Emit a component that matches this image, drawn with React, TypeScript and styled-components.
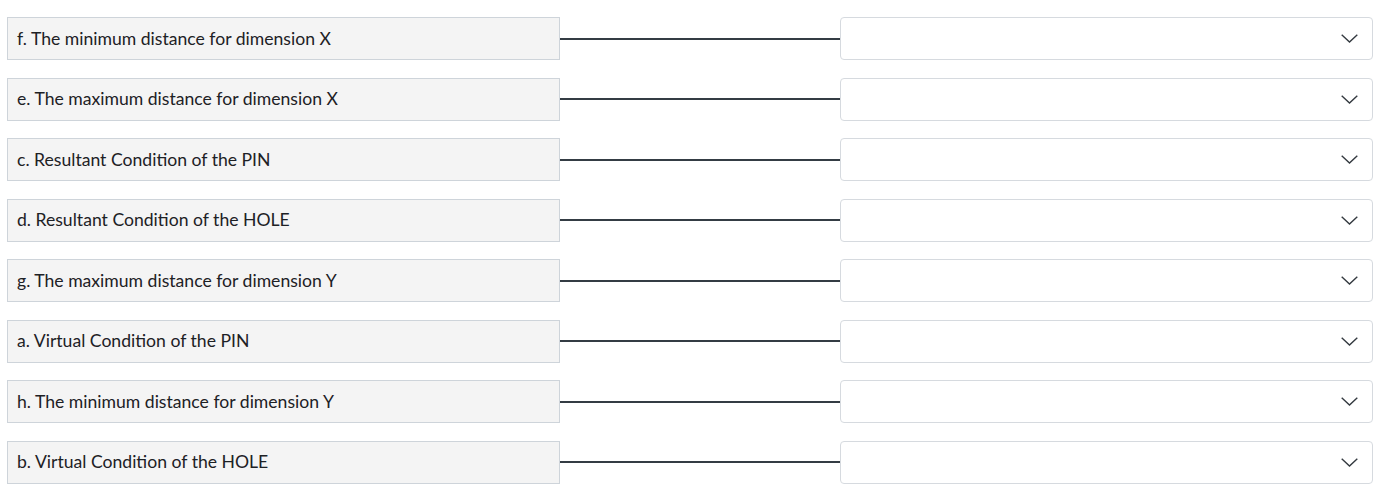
import styled, { createGlobalStyle } from "styled-components";

const GlobalStyle = createGlobalStyle`
    body {
        margin: 0;
        background: #fff;
        font-family: Lato, "Liberation Sans", sans-serif;
        color: #1d2125;
    }
`;

const List = styled.div`
    display: flex;
    flex-direction: column;
    gap: 17.5px;
    padding: 17px 4px 0 7px;
`;

const Row = styled.div`
    display: flex;
    align-items: center;
    height: 43px;
`;

const Prompt = styled.div`
    box-sizing: border-box;
    width: 553px;
    height: 100%;
    display: flex;
    align-items: center;
    padding: 0 9px 1px;
    background: #f4f4f4;
    border: 1px solid #ced4da;
    font-size: 17.6px;
    white-space: nowrap;
`;

const Connector = styled.div`
    width: 280px;
    height: 2px;
    background: #343c44;
`;

const Select = styled.div`
    box-sizing: border-box;
    flex: 1;
    height: 100%;
    display: flex;
    align-items: center;
    justify-content: flex-end;
    padding-right: 14px;
    border: 1px solid #d6dadf;
    border-radius: 4px;
    background: #fff;
`;

const Chevron = () => (
    <svg width="17" height="9" viewBox="0 0 17 9">
        <path d="M0.7 0.7 L8.5 8 L16.3 0.7" fill="none" stroke="#343a40" strokeWidth="1.4" />
    </svg>
);

const items = [
    "f. The minimum distance for dimension X",
    "e. The maximum distance for dimension X",
    "c. Resultant Condition of the PIN",
    "d. Resultant Condition of the HOLE",
    "g. The maximum distance for dimension Y",
    "a. Virtual Condition of the PIN",
    "h. The minimum distance for dimension Y",
    "b. Virtual Condition of the HOLE",
];

export default function App() {
    return (
        <>
            <GlobalStyle />
            <List>
                {items.map((text) => (
                    <Row key={text}>
                        <Prompt>{text}</Prompt>
                        <Connector />
                        <Select>
                            <Chevron />
                        </Select>
                    </Row>
                ))}
            </List>
        </>
    );
}
